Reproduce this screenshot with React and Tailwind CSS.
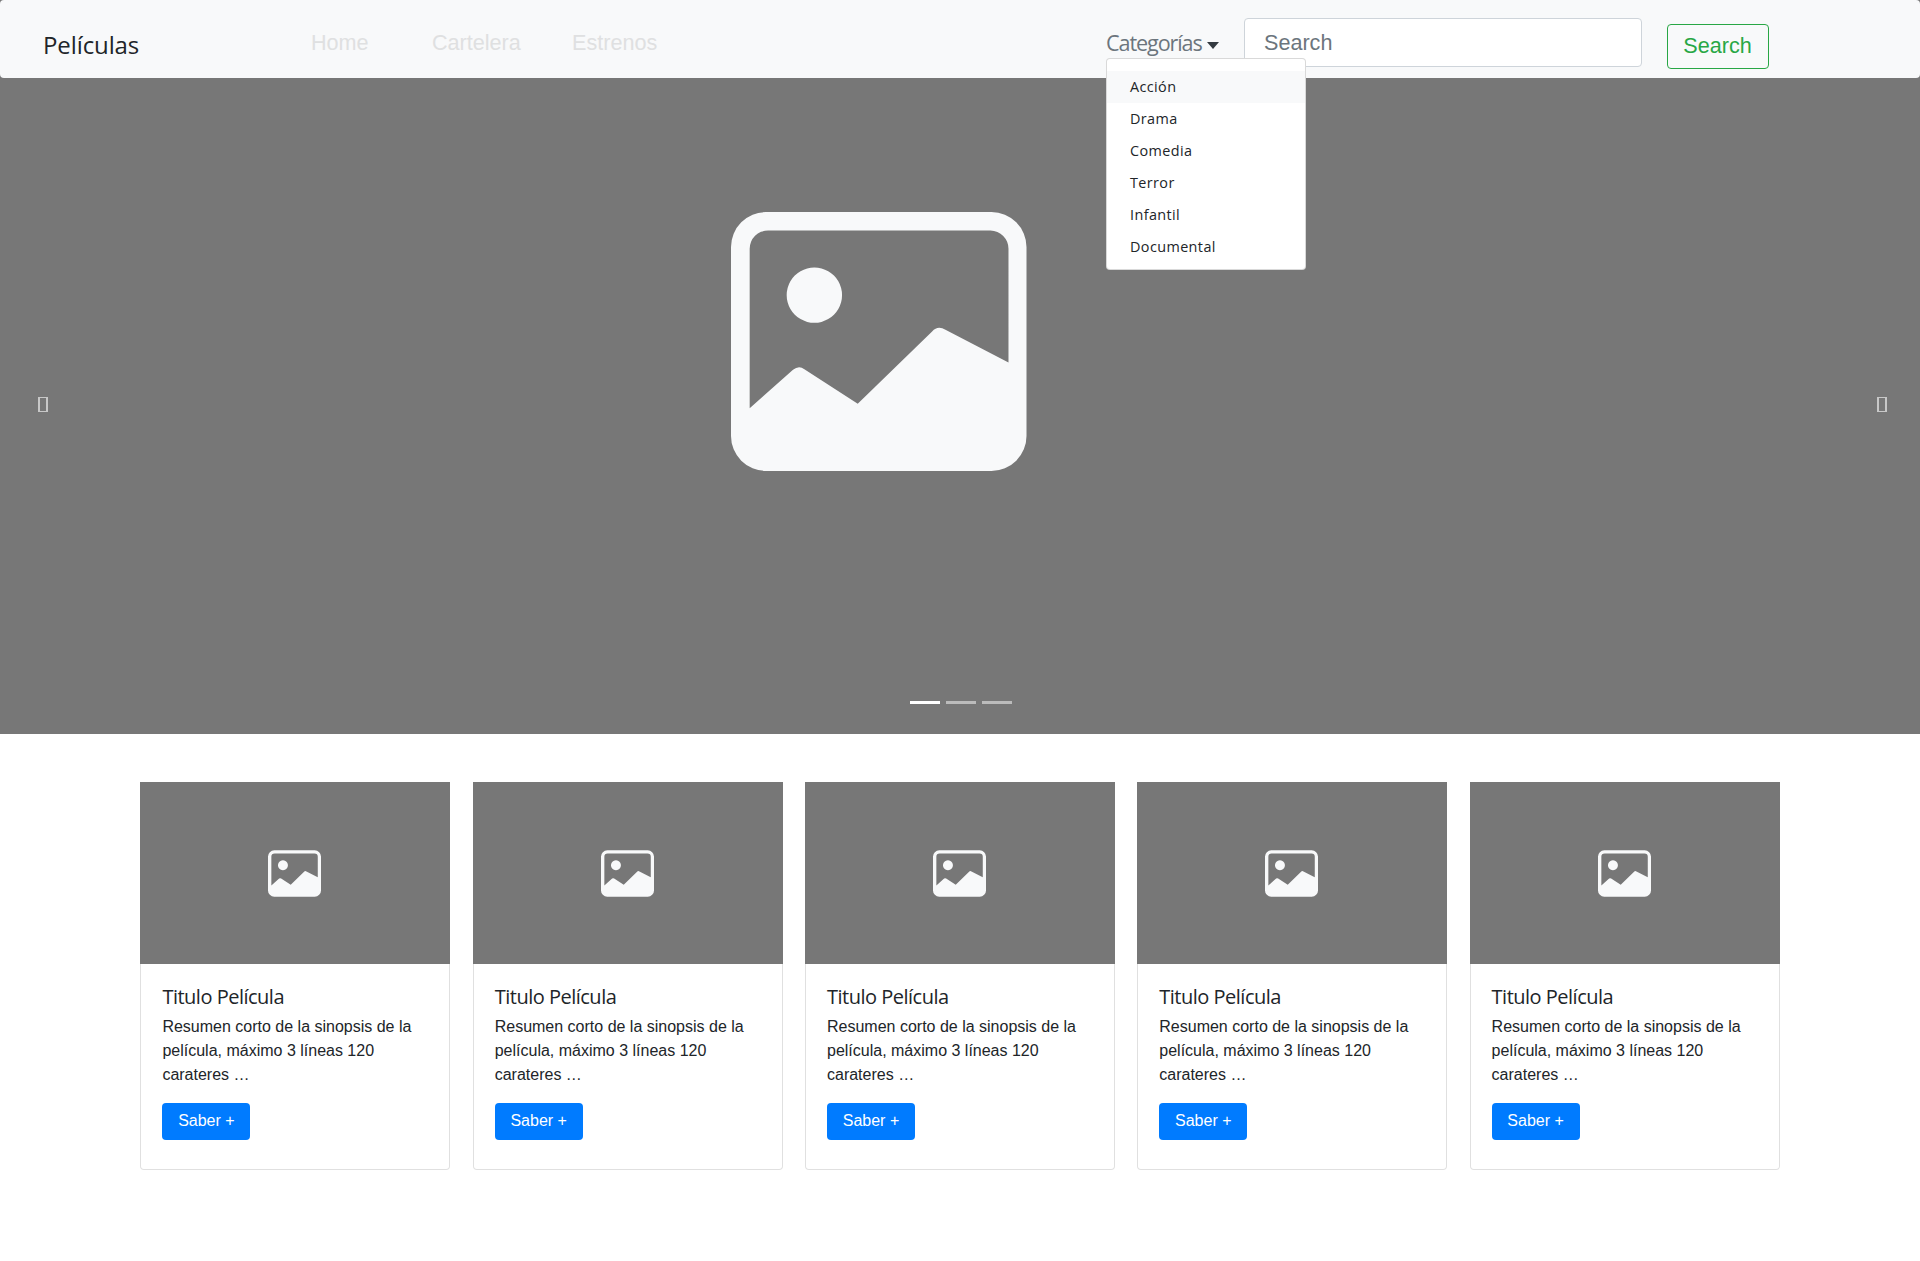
import React from "react";

const arial = "font-['Liberation_Sans',Arial,sans-serif]";
const ui = "font-['Open_Sans','Noto_Sans',sans-serif]";
const categories = ["Acción", "Drama", "Comedia", "Terror", "Infantil", "Documental"];

function PlaceholderIcon({ className }) {
  return (
    <svg viewBox="92 67 886 776" className={className} aria-hidden="true">
      <path
        fill="#f8f9fa"
        fillRule="evenodd"
        d="M197 67H873A105 105 0 0 1 978 172V738A105 105 0 0 1 873 843H197A105 105 0 0 1 92 738V172A105 105 0 0 1 197 67ZM203 122A55 55 0 0 0 148 177V655L278 540Q295 526 312 538L472 642L695 425Q712 406 735 420L924 518V177A55 55 0 0 0 870 122ZM342 233A83 83 0 1 1 341.9 233Z"
      />
    </svg>
  );
}

function Tofu() {
  return <span className="block w-[10px] h-[15px] border-x-2 border-y border-white/60" />;
}

function Navbar() {
  return (
    <div className="bg-[#777777]">
      <nav className="relative z-10 h-[78px] bg-[#f8f9fa] rounded-[4px] flex items-start">
        <a className={`${ui} ml-[43px] mt-[27px] w-[268px] text-[24px] leading-[36px] tracking-[-0.1px] text-[#212529]`}>
          Películas
        </a>
        <div className={`${arial} flex text-[21.6px] leading-[26px] mt-[30px] text-[#dfe0e1]`}>
          <a className="w-[121px]">Home</a>
          <a className="w-[140px]">Cartelera</a>
          <a className="w-[534px]">Estrenos</a>
        </div>
        <div className="relative">
          <button className={`${ui} flex items-center mt-[26px] text-[21.6px] leading-[34px] tracking-[-1.1px] text-[#6c757d]`}>
            Categorías
            <span className="ml-[5px] mt-[4px] border-x-[6px] border-t-[7px] border-x-transparent border-t-[#343a40]" />
          </button>
        </div>
        <input
          readOnly
          placeholder="Search"
          className={`${arial} absolute left-[1244px] top-[18px] w-[398px] h-[49px] px-[19px] bg-white border border-[#ced4da] rounded-[4px] text-[21.6px] placeholder:text-[#6c757d]`}
        />
        <button className={`${arial} absolute left-[1667px] top-[24px] w-[102px] h-[45px] pr-[1px] pb-[1px] border border-[#28a745] rounded-[4px] text-[21.6px] text-[#28a745]`}>
          Search
        </button>
        <ul className={`${ui} absolute left-[1106px] top-[58px] w-[200px] pt-[12px] pb-[6px] bg-white border border-black/15 rounded-[4px] text-[14.4px] tracking-[0.4px] text-[#212529]`}>
          {categories.map((c, i) => (
            <li key={c} className={`h-[32px] pl-[23px] leading-[32px] ${i === 0 ? "bg-[#f8f9fa]" : ""}`}>
              {c}
            </li>
          ))}
        </ul>
      </nav>
    </div>
  );
}

function Carousel() {
  return (
    <section className="relative h-[656px] bg-[#777777] pt-[134px] pl-[731px]">
      <PlaceholderIcon className="w-[295.5px] h-[259px]" />
      <div className="absolute left-[37.5px] top-[319px]"><Tofu /></div>
      <div className="absolute right-[33px] top-[319px]"><Tofu /></div>
      <div className="absolute left-[910px] top-[623px] flex gap-[6px]">
        <span className="w-[30px] h-[3px] bg-white" />
        <span className="w-[30px] h-[3px] bg-white/50" />
        <span className="w-[30px] h-[3px] bg-white/50" />
      </div>
    </section>
  );
}

function MovieCard() {
  return (
    <div className="h-[388px] border border-black/12 border-t-0 rounded-[4px]">
      <div className="-mx-px h-[182px] bg-[#777777] flex items-center justify-center">
        <PlaceholderIcon className="w-[53px] h-[47px] mr-[1px]" />
      </div>
      <div className="px-[21px] pt-[21px]">
        <h5 className={`${ui} text-[20px] leading-[24px] tracking-[-0.5px] text-[#212529]`}>Titulo Película</h5>
        <p className={`${arial} mt-[6px] text-[16px] leading-[24px] text-[#212529]`}>
          Resumen corto de la sinopsis de la película, máximo 3 líneas 120 carateres …
        </p>
        <a className={`${arial} mt-[16px] flex items-center justify-center w-[88px] h-[37px] pb-[1px] bg-[#007bff] rounded-[4px] text-[16px] text-white`}>
          Saber +
        </a>
      </div>
    </div>
  );
}

export default function App() {
  return (
    <div className="min-h-[1261px] bg-white">
      <Navbar />
      <Carousel />
      <div className="ml-[140.4px] mt-[48px] grid grid-cols-[repeat(5,310px)] gap-[22.3px]">
        {[1, 2, 3, 4, 5].map((n) => (
          <MovieCard key={n} />
        ))}
      </div>
    </div>
  );
}
